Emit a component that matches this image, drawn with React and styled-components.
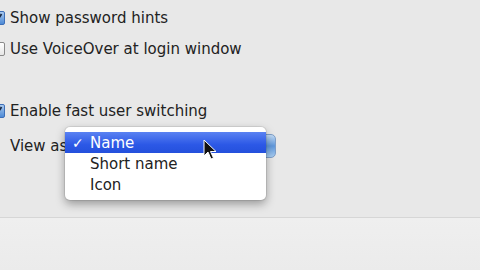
import React from "react";
import styled, { createGlobalStyle } from "styled-components";

const GlobalStyle = createGlobalStyle`
  body {
    margin: 0;
    background: #ececec;
    font-family: "DejaVu Sans", "Liberation Sans", sans-serif;
  }
`;

const Window = styled.div`
  width: 480px;
  height: 270px;
  overflow: hidden;
  display: flex;
  flex-direction: column;
  position: relative;
`;

const Pane = styled.div`
  height: 218px;
  background: #e8e8e8;
  border-bottom: 1px solid #d6d6d6;
  padding-top: 10px;
  box-sizing: border-box;
`;

const Footer = styled.div`
  flex: 1;
  background: linear-gradient(#efefef, #ebebeb);
`;

const Row = styled.div`
  display: flex;
  align-items: center;
  height: 16px;
  margin-bottom: ${(p) => p.gap || 15}px;
  font-size: 15px;
  color: #222;
`;

const Box = styled.span`
  width: 14px;
  height: 14px;
  margin-left: -9px;
  margin-right: 5px;
  border-radius: 2px;
  box-sizing: border-box;
  display: flex;
  align-items: center;
  justify-content: center;
  border: 1px solid ${(p) => (p.checked ? "#3d6fb8" : "#8a8a8a")};
  background: ${(p) =>
    p.checked
      ? "linear-gradient(#a9c9ee, #4d8ad6)"
      : "linear-gradient(#ffffff, #e6e6e6)"};
`;

const Label = styled.span``;

const ViewRow = styled.div`
  display: flex;
  align-items: center;
  padding-left: 10px;
  margin-top: 9px;
  font-size: 15px;
  color: #222;
  gap: 4px;
`;

const PopupButton = styled.div`
  width: 205px;
  height: 24px;
  border-radius: 5px;
  border: 1px solid #7f9fc8;
  box-sizing: border-box;
  background: linear-gradient(#c4dcf6, #5f98dc 50%, #a8cdf2);
`;

const Menu = styled.div`
  position: absolute;
  left: 65px;
  top: 127px;
  width: 201px;
  padding: 5px 0;
  background: #fff;
  border-radius: 5px;
  box-shadow: 0 4px 10px rgba(0, 0, 0, 0.35), 0 0 0 1px rgba(0, 0, 0, 0.08);
  font-size: 15px;
`;

const Item = styled.div`
  height: 21px;
  display: flex;
  align-items: center;
  padding-left: 25px;
  position: relative;
  color: ${(p) => (p.active ? "#fff" : "#222")};
  background: ${(p) =>
    p.active ? "linear-gradient(#5a82f2, #2c58e6 60%, #2450dc)" : "none"};
`;

const Check = styled.span`
  position: absolute;
  left: 7px;
  font-size: 14px;
`;

const Cursor = styled.svg`
  position: absolute;
  left: 203px;
  top: 139px;
`;

const Tick = () => (
  <svg width="10" height="10" viewBox="0 0 10 10">
    <path d="M1.5 5 L4 8 L8.5 1" fill="none" stroke="#1a2a44" strokeWidth="1.8" />
  </svg>
);

const App = () => {
  return (
    <Window>
      <GlobalStyle />
      <Pane>
        <Row gap={15}>
          <Box checked>
            <Tick />
          </Box>
          <Label>Show password hints</Label>
        </Row>
        <Row gap={46}>
          <Box />
          <Label>Use VoiceOver at login window</Label>
        </Row>
        <Row gap={0}>
          <Box checked>
            <Tick />
          </Box>
          <Label>Enable fast user switching</Label>
        </Row>
        <ViewRow>
          <span>View as</span>
          <PopupButton />
        </ViewRow>
      </Pane>
      <Footer />
      <Menu>
        <Item active>
          <Check>✓</Check>
          Name
        </Item>
        <Item>Short name</Item>
        <Item>Icon</Item>
      </Menu>
      <Cursor width="14" height="22" viewBox="0 0 14 22">
        <path
          d="M1 1 L1 17 L5 13 L8 20 L10.5 19 L7.5 12.5 L13 12.5 Z"
          fill="#111"
          stroke="#fff"
          strokeWidth="1"
        />
      </Cursor>
    </Window>
  );
};

export default App;
